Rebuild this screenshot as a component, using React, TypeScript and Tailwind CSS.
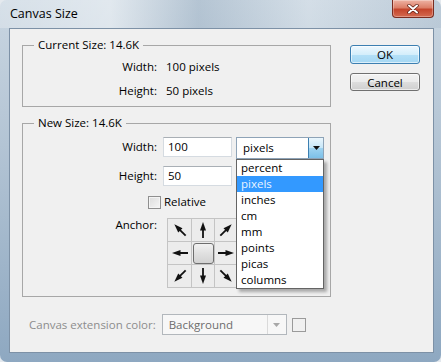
import React from 'react';

const units = ['percent', 'pixels', 'inches', 'cm', 'mm', 'points', 'picas', 'columns'];

const Arrow = ({ rot }: { rot: string }) => (
  <svg width="20" height="20" viewBox="0 0 20 20" className={rot}>
    <path d="M10 18V9" stroke="#111" strokeWidth="1.8" />
    <path d="M10 2L7 10.5H13Z" fill="#111" />
  </svg>
);

const Cell = ({ children }: { children?: React.ReactNode }) => (
  <div className="bg-[#ececec] flex items-center justify-center">{children}</div>
);

export default function App() {
  return (
    <div className="w-[441px] h-[362px] bg-[#e4e9ee] font-['Open_Sans','Noto_Sans',sans-serif] text-[11.5px] text-black select-none">
      <div className="w-full h-full rounded-[7px] bg-[linear-gradient(180deg,#c9d6e1_0%,#b3c4d4_40%,#8ea8c1_100%)] flex flex-col pl-[9px] pr-[7px] pb-[9px] overflow-hidden">
        {/* title bar */}
        <div className="h-[28px] shrink-0 flex items-start justify-between bg-[linear-gradient(90deg,rgba(255,255,255,0.25)_0%,rgba(255,255,255,0.45)_25%,rgba(120,145,170,0.25)_45%,rgba(255,255,255,0.2)_70%,rgba(120,145,170,0.15)_100%)] -ml-[9px] -mr-[7px] pl-[9px] pr-[7px]">
          <span className="text-[12.5px] leading-[16px] pt-[6px] pl-[1px]">Canvas Size</span>
          <div className="w-[42px] h-[18px] rounded-b-[4px] border border-t-0 border-[#7a2c20] bg-[linear-gradient(180deg,#eeb3a4_0%,#dc7f68_45%,#c4452c_55%,#d46a50_100%)] shadow-[inset_0_0_0_1px_rgba(255,255,255,0.3)] flex items-center justify-center">
            <svg width="12" height="10" viewBox="0 0 12 10">
              <path d="M2 1.5L10 8.5M10 1.5L2 8.5" stroke="#5a1a10" strokeWidth="3.4" strokeLinecap="round" />
              <path d="M2 1.5L10 8.5M10 1.5L2 8.5" stroke="#fff" strokeWidth="2" strokeLinecap="round" />
            </svg>
          </div>
        </div>

        {/* client area */}
        <div className="flex-1 bg-[#f0f0f0] border border-[#7d91a6] flex flex-col">
          <div className="flex">
            <div className="pl-[12px] pt-[8px] flex flex-col gap-[8px]">
              <fieldset className="w-[309px] h-[70px] border border-[#a7a7a7]">
                <legend className="ml-[11px] px-[4px] leading-[16px]">Current Size: 14.6K</legend>
                <div className="mt-[6px] flex flex-col gap-[8px]">
                  <div className="flex h-[16px] items-center">
                    <span className="w-[134px] text-right">Width:</span>
                    <span className="ml-[9px]">100 pixels</span>
                  </div>
                  <div className="flex h-[16px] items-center">
                    <span className="w-[134px] text-right">Height:</span>
                    <span className="ml-[9px]">50 pixels</span>
                  </div>
                </div>
              </fieldset>

              <fieldset className="w-[309px] h-[182px] border border-[#a7a7a7]">
                <legend className="ml-[11px] px-[4px] leading-[16px]">New Size: 14.6K</legend>
                <div className="mt-[6px] flex flex-col">
                  <div className="flex h-[22px]">
                    <span className="w-[134px] text-right leading-[20px]">Width:</span>
                    <div className="ml-[6px] w-[69px] h-[20px] bg-white border border-[#d5dbe1] border-t-[#a9afb5] pl-[4px] leading-[18px]">100</div>
                    <div className="relative ml-[4px] w-[88px] h-[22px]">
                      <div className="w-full h-full bg-white border border-[#8ea3b7] flex">
                        <span className="flex-1 pl-[6px] leading-[20px]">pixels</span>
                        <div className="w-[15px] h-full border-l border-[#3c7fb1] bg-[linear-gradient(180deg,#eaf6fd_0%,#c6e6f8_50%,#9fd3f1_51%,#7cc0e8_100%)] flex items-center justify-center">
                          <svg width="7" height="4" viewBox="0 0 7 4"><path d="M0 0H7L3.5 4Z" fill="#111" /></svg>
                        </div>
                      </div>
                      <div className="absolute top-full left-0 w-[88px] z-10 bg-white border border-[#646464] shadow-[3px_3px_3px_rgba(0,0,0,0.3)]">
                        {units.map((u) => (
                          <div
                            key={u}
                            className={`h-[16px] leading-[16px] pl-[4px] ${u === 'pixels' ? 'bg-[#3399ff] text-[#eaf4ff]' : ''}`}
                          >
                            {u}
                          </div>
                        ))}
                      </div>
                    </div>
                  </div>

                  <div className="flex h-[20px] mt-[7px]">
                    <span className="w-[134px] text-right leading-[20px]">Height:</span>
                    <div className="ml-[6px] w-[69px] h-[20px] bg-white border border-[#d5dbe1] border-t-[#a9afb5] pl-[4px] leading-[18px]">50</div>
                  </div>

                  <div className="flex h-[16px] mt-[8px] items-center pl-[125px]">
                    <div className="w-[13px] h-[13px] border border-[#8f8f8f] bg-[linear-gradient(135deg,#dcdcdc_0%,#f6f6f6_100%)] shadow-[inset_0_0_0_1px_#f4f4f4]" />
                    <span className="ml-[3px]">Relative</span>
                  </div>

                  <div className="flex mt-[8px]">
                    <span className="w-[134px] text-right leading-[13px]">Anchor:</span>
                    <div className="ml-[10px] grid grid-cols-[23px_22px_22px] grid-rows-[22px_22px_22px] gap-px bg-[#c4c4c4] border border-[#c4c4c4]">
                      <Cell><Arrow rot="-rotate-45" /></Cell>
                      <Cell><Arrow rot="rotate-0" /></Cell>
                      <Cell><Arrow rot="rotate-45" /></Cell>
                      <Cell><Arrow rot="-rotate-90" /></Cell>
                      <Cell>
                        <div className="w-[21px] h-[21px] rounded-[3px] border border-[#6e6e6e] bg-[linear-gradient(180deg,#f2f2f2_0%,#e0e0e0_50%,#d2d2d2_100%)]" />
                      </Cell>
                      <Cell><Arrow rot="rotate-90" /></Cell>
                      <Cell><Arrow rot="rotate-[225deg]" /></Cell>
                      <Cell><Arrow rot="rotate-180" /></Cell>
                      <Cell><Arrow rot="rotate-[135deg]" /></Cell>
                    </div>
                  </div>
                </div>
              </fieldset>
            </div>

            <div className="ml-[19px] pt-[16px] flex flex-col">
              <button className="w-[70px] h-[19px] rounded-[3px] border border-[#3c7fb1] bg-[linear-gradient(180deg,#eef8fe_0%,#d4eefb_50%,#b4e0f7_51%,#a4d7f3_100%)] shadow-[inset_0_0_0_1px_rgba(255,255,255,0.6)] text-[11.5px] leading-[16px]">
                OK
              </button>
              <button className="mt-[9px] w-[70px] h-[18px] rounded-[3px] border border-[#707070] bg-[linear-gradient(180deg,#f2f2f2_0%,#ebebeb_50%,#dddddd_51%,#cfcfcf_100%)] shadow-[inset_0_0_0_1px_rgba(255,255,255,0.6)] text-[11.5px] leading-[15px]">
                Cancel
              </button>
            </div>
          </div>

          <div className="mt-[17px] pl-[19px] flex items-center h-[21px]">
            <span className="text-[#8d8d8d]">Canvas extension color:</span>
            <div className="ml-[6px] w-[125px] h-[21px] border border-[#b2b7bc] bg-[#f7f7f7] flex">
              <span className="flex-1 pl-[6px] leading-[19px] text-[#6d6d6d]">Background</span>
              <div className="w-[19px] h-full border-l border-[#dadada] flex items-center justify-center">
                <svg width="7" height="4" viewBox="0 0 7 4"><path d="M0 0H7L3.5 4Z" fill="#a8a8a8" /></svg>
              </div>
            </div>
            <div className="ml-[5px] w-[14px] h-[14px] border border-[#9a9a9a] bg-[#f0f0f0]" />
          </div>
        </div>
      </div>
    </div>
  );
}
